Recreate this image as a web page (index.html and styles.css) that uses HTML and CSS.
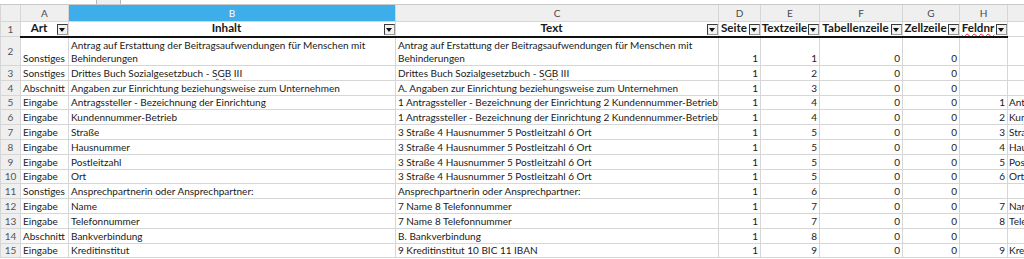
FILE: index.html
```html
<!DOCTYPE html>
<html lang="de">
<head>
    <meta charset="UTF-8">
    <meta name="viewport" content="width=device-width, initial-scale=1.0">
    <title>Tabelle</title>
    <link rel="stylesheet" href="styles.css">
</head>
<body>

    <div class="topbar">
        <div class="namebox"></div>
        <div class="tools"></div>
        <div class="formula"></div>
    </div>

    <table class="sheet">
        <colgroup>
            <col style="width:20px">
            <col style="width:48px">
            <col style="width:327px">
            <col style="width:323px">
            <col style="width:42px">
            <col style="width:59px">
            <col style="width:83px">
            <col style="width:57px">
            <col style="width:48px">
            <col style="width:17px">
        </colgroup>
        <tr class="colhead">
            <th class="corner"></th>
            <th>A</th>
            <th class="sel">B</th>
            <th>C</th>
            <th>D</th>
            <th>E</th>
            <th>F</th>
            <th>G</th>
            <th>H</th>
            <th></th>
        </tr>
        <tr class="r1">
            <td class="rh">1</td>
            <td class="hd"><div class="hd-in"><span class="lbl">Art</span><span class="dd"></span></div></td>
            <td class="hd"><div class="hd-in"><span class="lbl">Inhalt</span><span class="dd"></span></div></td>
            <td class="hd"><div class="hd-in"><span class="lbl">Text</span><span class="dd"></span></div></td>
            <td class="hd"><div class="hd-in"><span class="lbl">Seite</span><span class="dd"></span></div></td>
            <td class="hd"><div class="hd-in"><span class="lbl">Textzeile</span><span class="dd"></span></div></td>
            <td class="hd"><div class="hd-in"><span class="lbl">Tabellenzeile</span><span class="dd"></span></div></td>
            <td class="hd"><div class="hd-in"><span class="lbl">Zellzeile</span><span class="dd"></span></div></td>
            <td class="hd"><div class="hd-in"><span class="lbl"><span class="sp">Feldnr</span></span><span class="dd"></span></div></td>
            <td class="hd blank"></td>
        </tr>
        <tr class="r2">
            <td class="rh">2</td>
            <td>Sonstiges</td>
            <td class="wrap">Antrag auf Erstattung der Beitragsaufwendungen für Menschen mit Behinderungen</td>
            <td class="wrap">Antrag auf Erstattung der Beitragsaufwendungen für Menschen mit Behinderungen</td>
            <td class="n">1</td><td class="n">1</td><td class="n">0</td><td class="n">0</td><td class="n"></td><td></td>
        </tr>
        <tr>
            <td class="rh">3</td>
            <td>Sonstiges</td>
            <td>Drittes Buch Sozialgesetzbuch - <span class="sp">SGB</span> III</td>
            <td>Drittes Buch Sozialgesetzbuch - <span class="sp">SGB</span> III</td>
            <td class="n">1</td><td class="n">2</td><td class="n">0</td><td class="n">0</td><td class="n"></td><td></td>
        </tr>
        <tr>
            <td class="rh">4</td>
            <td>Abschnitt</td>
            <td>Angaben zur Einrichtung beziehungsweise zum Unternehmen</td>
            <td>A. Angaben zur Einrichtung beziehungsweise zum Unternehmen</td>
            <td class="n">1</td><td class="n">3</td><td class="n">0</td><td class="n">0</td><td class="n"></td><td></td>
        </tr>
        <tr>
            <td class="rh">5</td>
            <td>Eingabe</td>
            <td>Antragssteller - Bezeichnung der Einrichtung</td>
            <td>1 Antragssteller - Bezeichnung der Einrichtung 2 Kundennummer-Betrieb</td>
            <td class="n">1</td><td class="n">4</td><td class="n">0</td><td class="n">0</td><td class="n">1</td><td class="i">Ant</td>
        </tr>
        <tr>
            <td class="rh">6</td>
            <td>Eingabe</td>
            <td>Kundennummer-Betrieb</td>
            <td>1 Antragssteller - Bezeichnung der Einrichtung 2 Kundennummer-Betrieb</td>
            <td class="n">1</td><td class="n">4</td><td class="n">0</td><td class="n">0</td><td class="n">2</td><td class="i">Kun</td>
        </tr>
        <tr>
            <td class="rh">7</td>
            <td>Eingabe</td>
            <td>Straße</td>
            <td>3 Straße 4 Hausnummer 5 Postleitzahl 6 Ort</td>
            <td class="n">1</td><td class="n">5</td><td class="n">0</td><td class="n">0</td><td class="n">3</td><td class="i">Stra</td>
        </tr>
        <tr>
            <td class="rh">8</td>
            <td>Eingabe</td>
            <td>Hausnummer</td>
            <td>3 Straße 4 Hausnummer 5 Postleitzahl 6 Ort</td>
            <td class="n">1</td><td class="n">5</td><td class="n">0</td><td class="n">0</td><td class="n">4</td><td class="i">Hau</td>
        </tr>
        <tr>
            <td class="rh">9</td>
            <td>Eingabe</td>
            <td>Postleitzahl</td>
            <td>3 Straße 4 Hausnummer 5 Postleitzahl 6 Ort</td>
            <td class="n">1</td><td class="n">5</td><td class="n">0</td><td class="n">0</td><td class="n">5</td><td class="i">Pos</td>
        </tr>
        <tr>
            <td class="rh">10</td>
            <td>Eingabe</td>
            <td>Ort</td>
            <td>3 Straße 4 Hausnummer 5 Postleitzahl 6 Ort</td>
            <td class="n">1</td><td class="n">5</td><td class="n">0</td><td class="n">0</td><td class="n">6</td><td class="i">Ort</td>
        </tr>
        <tr>
            <td class="rh">11</td>
            <td>Sonstiges</td>
            <td>Ansprechpartnerin oder Ansprechpartner:</td>
            <td>Ansprechpartnerin oder Ansprechpartner:</td>
            <td class="n">1</td><td class="n">6</td><td class="n">0</td><td class="n">0</td><td class="n"></td><td></td>
        </tr>
        <tr>
            <td class="rh">12</td>
            <td>Eingabe</td>
            <td>Name</td>
            <td>7 Name 8 Telefonnummer</td>
            <td class="n">1</td><td class="n">7</td><td class="n">0</td><td class="n">0</td><td class="n">7</td><td class="i">Nar</td>
        </tr>
        <tr>
            <td class="rh">13</td>
            <td>Eingabe</td>
            <td>Telefonnummer</td>
            <td>7 Name 8 Telefonnummer</td>
            <td class="n">1</td><td class="n">7</td><td class="n">0</td><td class="n">0</td><td class="n">8</td><td class="i">Tele</td>
        </tr>
        <tr>
            <td class="rh">14</td>
            <td>Abschnitt</td>
            <td>Bankverbindung</td>
            <td>B. Bankverbindung</td>
            <td class="n">1</td><td class="n">8</td><td class="n">0</td><td class="n">0</td><td class="n"></td><td></td>
        </tr>
        <tr>
            <td class="rh">15</td>
            <td>Eingabe</td>
            <td>Kreditinstitut</td>
            <td>9 Kreditinstitut 10 BIC 11 IBAN</td>
            <td class="n">1</td><td class="n">9</td><td class="n">0</td><td class="n">0</td><td class="n">9</td><td class="i">Kre</td>
        </tr>
    </table>

</body>
</html>
```

FILE: styles.css
```css
body {
    margin: 0;
    width: 1024px;
    height: 259px;
    overflow: hidden;
    background: #fff;
    font-family: Lato, "Noto Sans", sans-serif;
    font-size: 10px;
    color: #1a1a1a;
}
.topbar {
    display: flex;
    height: 4px;
    background: #efefef;
    border-bottom: 1px solid #c9c9c9;
}
.namebox {
    width: 96px;
    background: #fff;
    border-right: 1px solid #b8b8b8;
}
.tools {
    width: 23px;
}
.formula {
    flex: 1;
    background: #fff;
    border-left: 1px solid #b8b8b8;
}
.sheet {
    border-collapse: collapse;
    table-layout: fixed;
    width: 1024px;
}
.sheet tr {
    height: 14.8px;
}
.sheet td {
    border: 1px solid #d6d6d6;
    padding: 0 2px 1px;
    line-height: 12px;
    white-space: nowrap;
    overflow: hidden;
    vertical-align: bottom;
}
.sheet tr.colhead {
    height: 16px;
}
.colhead th {
    padding: 0;
    background: #efefef;
    color: #4a4a4a;
    font-weight: normal;
    font-size: 10px;
    border: 1px solid #d6d6d6;
    border-top: none;
}
.colhead th.sel {
    background: #3daee9;
    color: #fff;
}
.sheet td.rh {
    background: #efefef;
    color: #555;
    text-align: center;
    vertical-align: middle;
    padding: 0;
}
.sheet tr.r1 {
    height: 15px;
}
.sheet td.hd {
    background: #fff;
    font-weight: bold;
    font-size: 11.6px;
    padding: 0;
    border-bottom: 2px solid #111;
    vertical-align: middle;
}
.hd-in {
    display: flex;
    align-items: center;
    height: 14px;
}
.lbl {
    flex: 1;
    text-align: center;
    overflow: hidden;
    white-space: nowrap;
    line-height: 12px;
    padding-bottom: 2px;
}
.dd {
    position: relative;
    width: 9px;
    height: 9px;
    margin-top: 2px;
    border: 1px solid #3a3a3a;
    border-right-color: #9a9a9a;
    border-bottom-color: #9a9a9a;
    background: #f2f2f2;
    flex: none;
}
.dd::after {
    content: "";
    position: absolute;
    left: 1px;
    top: 3px;
    border-left: 3.5px solid transparent;
    border-right: 3.5px solid transparent;
    border-top: 4px solid #111;
}
.sheet tr.r2 {
    height: 29px;
}
.sheet td.wrap {
    white-space: normal;
    line-height: 12.5px;
}
.sheet td.n {
    text-align: right;
}
.sheet td.i {
    padding-left: 1px;
    padding-right: 0;
    text-overflow: clip;
}
.sheet td.blank {
    border-bottom: 1px solid #d6d6d6;
}
.sp {
    text-decoration: underline wavy #e02020;
    text-decoration-thickness: 1px;
    text-underline-offset: 1px;
    text-decoration-skip-ink: none;
}
```
